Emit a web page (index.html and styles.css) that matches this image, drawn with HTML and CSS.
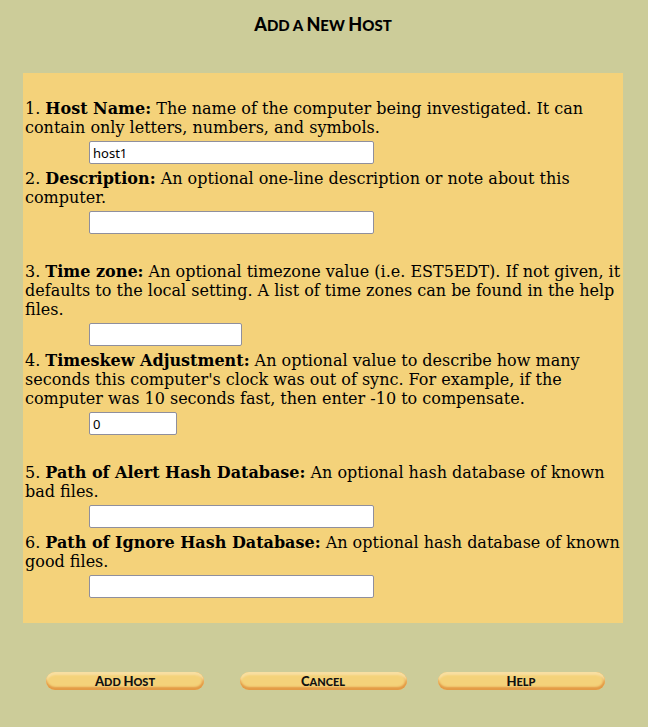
FILE: index.html
```
<!DOCTYPE html>
<html lang="en">
<head>
<meta charset="utf-8">
<title>Add a New Host</title>
<link rel="stylesheet" href="styles.css">
</head>
<body>
<form class="page">
  <h1 class="title engraved"><span class="cap">A</span>dd a <span class="cap">N</span>ew <span class="cap">H</span>ost</h1>
  <div class="panel">
    <div class="group">
      <div class="field">
        <label for="host">1. <b>Host Name:</b> The name of the computer being investigated. It can contain only letters, numbers, and symbols.</label>
        <input class="box" id="host" type="text" value="host1">
      </div>
      <div class="field">
        <label for="desc">2. <b>Description:</b> An optional one-line description or note about this computer.</label>
        <input class="box" id="desc" type="text">
      </div>
    </div>
    <div class="group">
      <div class="field">
        <label for="zone">3. <b>Time zone:</b> An optional timezone value (i.e. EST5EDT). If not given, it defaults to the local setting. A list of time zones can be found in the help files.</label>
        <input class="box medium" id="zone" type="text">
      </div>
      <div class="field">
        <label for="skew">4. <b>Timeskew Adjustment:</b> An optional value to describe how many seconds this computer's clock was out of sync. For example, if the computer was 10 seconds fast, then enter -10 to compensate.</label>
        <input class="box short" id="skew" type="text" value="0">
      </div>
    </div>
    <div class="group">
      <div class="field">
        <label for="alert">5. <b>Path of Alert Hash Database:</b> An optional hash database of known bad files.</label>
        <input class="box" id="alert" type="text">
      </div>
      <div class="field">
        <label for="ignore">6. <b>Path of Ignore Hash Database:</b> An optional hash database of known good files.</label>
        <input class="box" id="ignore" type="text">
      </div>
    </div>
  </div>
  <div class="actions">
    <button class="pill narrow engraved" type="button"><span class="cap">A</span>dd <span class="cap">H</span>ost</button>
    <button class="pill engraved" type="button"><span class="cap">C</span>ancel</button>
    <button class="pill engraved" type="button"><span class="cap">H</span>elp</button>
  </div>
</form>
</body>
</html>
```
FILE: styles.css
```
body {
  margin: 0;
  background: #cccc99;
  color: #000;
  font: 16px/19px "DejaVu Serif", serif;
}

.page {
  max-width: 600px;
  margin: 0 auto;
  padding: 14px 25px 0 23px;
}

.engraved {
  font-family: Lato, sans-serif;
  font-weight: 900;
  text-transform: uppercase;
}

.title {
  height: 20px;
  margin: 0 0 39px;
  font-size: 15px;
  line-height: 20px;
  text-align: center;
}

.title .cap {
  font-size: 18px;
}

.panel {
  display: flex;
  flex-direction: column;
  gap: 28px;
  padding: 26px 2px 25px;
  background: #f4d27a;
}

.group {
  display: flex;
  flex-direction: column;
  gap: 5px;
}

.field {
  display: flex;
  flex-direction: column;
  gap: 4px;
}

.box {
  box-sizing: border-box;
  width: 285px;
  height: 23px;
  margin: 0 0 0 64px;
  padding: 1px 3px;
  border: 1px solid #8f8f9d;
  border-radius: 2px;
  background: #fff;
  color: #000;
  font: 13px "Noto Sans", sans-serif;
}

.medium {
  width: 153px;
}

.short {
  width: 88px;
}

.actions {
  display: grid;
  grid-template-columns: repeat(3, 1fr);
  justify-items: center;
  padding: 49px 3px 0;
}

.pill {
  width: 167px;
  height: 18px;
  padding: 0;
  border: 0;
  border-radius: 9px;
  background: #f4d27a;
  box-shadow: inset 0 -3px 2px #e39a45, inset 0 3px 2px #f8dfa2, inset -2px 0 2px #e8ad58;
  color: #111;
  font-size: 11px;
  line-height: 18px;
}

.pill .cap {
  font-size: 13px;
}

.narrow {
  width: 158px;
}
```
